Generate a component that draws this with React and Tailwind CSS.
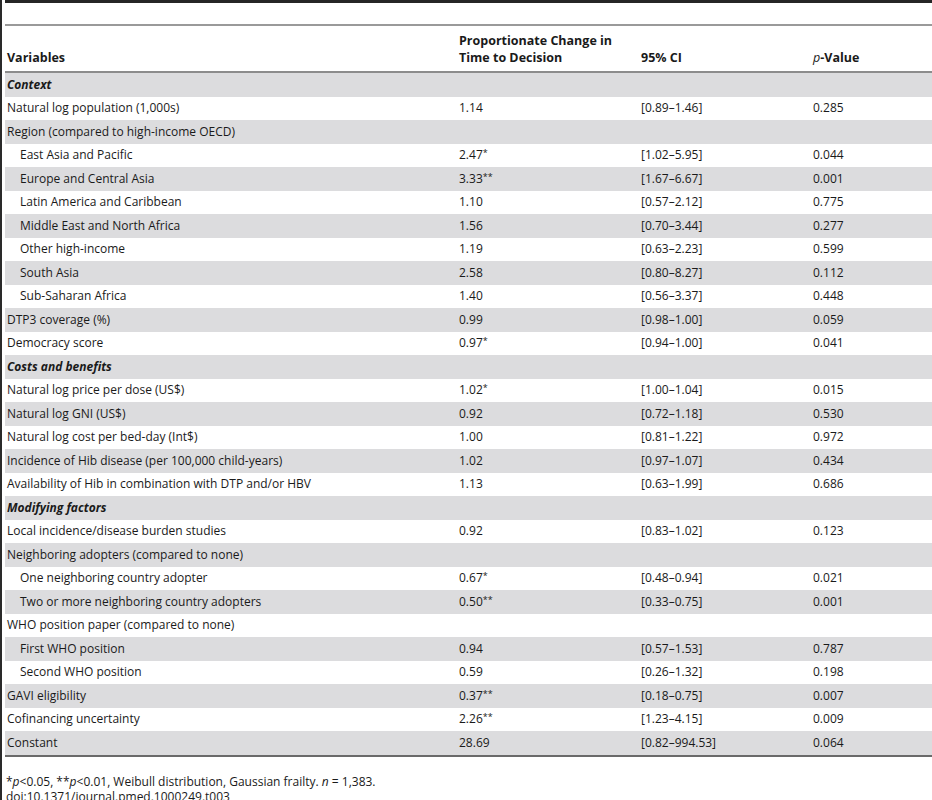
const rows = [
  { v: "Context", section: true },
  { v: "Natural log population (1,000s)", c: "1.14", ci: "[0.89–1.46]", p: "0.285" },
  { v: "Region (compared to high-income OECD)" },
  { v: "East Asia and Pacific", indent: true, c: "2.47*", ci: "[1.02–5.95]", p: "0.044" },
  { v: "Europe and Central Asia", indent: true, c: "3.33**", ci: "[1.67–6.67]", p: "0.001" },
  { v: "Latin America and Caribbean", indent: true, c: "1.10", ci: "[0.57–2.12]", p: "0.775" },
  { v: "Middle East and North Africa", indent: true, c: "1.56", ci: "[0.70–3.44]", p: "0.277" },
  { v: "Other high-income", indent: true, c: "1.19", ci: "[0.63–2.23]", p: "0.599" },
  { v: "South Asia", indent: true, c: "2.58", ci: "[0.80–8.27]", p: "0.112" },
  { v: "Sub-Saharan Africa", indent: true, c: "1.40", ci: "[0.56–3.37]", p: "0.448" },
  { v: "DTP3 coverage (%)", c: "0.99", ci: "[0.98–1.00]", p: "0.059" },
  { v: "Democracy score", c: "0.97*", ci: "[0.94–1.00]", p: "0.041" },
  { v: "Costs and benefits", section: true },
  { v: "Natural log price per dose (US$)", c: "1.02*", ci: "[1.00–1.04]", p: "0.015" },
  { v: "Natural log GNI (US$)", c: "0.92", ci: "[0.72–1.18]", p: "0.530" },
  { v: "Natural log cost per bed-day (Int$)", c: "1.00", ci: "[0.81–1.22]", p: "0.972" },
  { v: "Incidence of Hib disease (per 100,000 child-years)", c: "1.02", ci: "[0.97–1.07]", p: "0.434" },
  { v: "Availability of Hib in combination with DTP and/or HBV", c: "1.13", ci: "[0.63–1.99]", p: "0.686" },
  { v: "Modifying factors", section: true },
  { v: "Local incidence/disease burden studies", c: "0.92", ci: "[0.83–1.02]", p: "0.123" },
  { v: "Neighboring adopters (compared to none)" },
  { v: "One neighboring country adopter", indent: true, c: "0.67*", ci: "[0.48–0.94]", p: "0.021" },
  { v: "Two or more neighboring country adopters", indent: true, c: "0.50**", ci: "[0.33–0.75]", p: "0.001" },
  { v: "WHO position paper (compared to none)" },
  { v: "First WHO position", indent: true, c: "0.94", ci: "[0.57–1.53]", p: "0.787" },
  { v: "Second WHO position", indent: true, c: "0.59", ci: "[0.26–1.32]", p: "0.198" },
  { v: "GAVI eligibility", c: "0.37**", ci: "[0.18–0.75]", p: "0.007" },
  { v: "Cofinancing uncertainty", c: "2.26**", ci: "[1.23–4.15]", p: "0.009" },
  { v: "Constant", c: "28.69", ci: "[0.82–994.53]", p: "0.064" },
];

const cols = "grid grid-cols-[454px_182px_172px_1fr]";

function Stars({ text }) {
  if (!text) return null;
  const m = text.match(/^([^*]+)(\**)$/);
  return (
    <>
      {m[1]}
      {m[2] && <span className="text-[9px] align-top">{m[2]}</span>}
    </>
  );
}

export default function App() {
  return (
    <div
      className="w-[932px] h-[800px] bg-white text-[#1a1a1a] border-l-2 border-[#2a2a2a] pl-[3px] overflow-hidden"
      style={{ fontFamily: '"Open Sans", "Noto Sans", sans-serif' }}
    >
      <div className="h-[3px] bg-[#262626]" />
      <div className="h-[21px]" />
      <div className="h-[2px] bg-[#9a9a9a]" />

      {/* Header */}
      <div className={`${cols} h-[47px] items-end pb-[5px] text-[12.5px] font-bold leading-[17px] border-b-2 border-[#8c8c8c]`}>
        <div className="pl-[2px]">Variables</div>
        <div>
          Proportionate Change in
          <br />
          Time to Decision
        </div>
        <div>95% CI</div>
        <div>
          <span className="italic font-normal">p</span>-Value
        </div>
      </div>

      {/* Body */}
      <div className="text-[12px]">
        {rows.map((r, i) => (
          <div
            key={i}
            className={`${cols} h-[23.5px] items-center ${i % 2 === 0 ? "bg-[#dcdcde]" : "bg-white"}`}
          >
            <div className={`${r.indent ? "pl-[15px]" : "pl-[2px]"} ${r.section ? "italic font-bold" : ""} whitespace-nowrap`}>
              {r.v}
            </div>
            <div>
              <Stars text={r.c} />
            </div>
            <div>{r.ci}</div>
            <div>{r.p}</div>
          </div>
        ))}
      </div>
      <div className="h-[2px] bg-[#6a6a6a]" />

      {/* Footnote */}
      <div className="pt-[17px] pl-[1px] text-[12px] leading-[15px]">
        <div>
          *<span className="italic">p</span>&lt;0.05, **<span className="italic">p</span>&lt;0.01, Weibull distribution,
          Gaussian frailty. <span className="italic">n</span> = 1,383.
        </div>
        <div>doi:10.1371/journal.pmed.1000249.t003</div>
      </div>
    </div>
  );
}
